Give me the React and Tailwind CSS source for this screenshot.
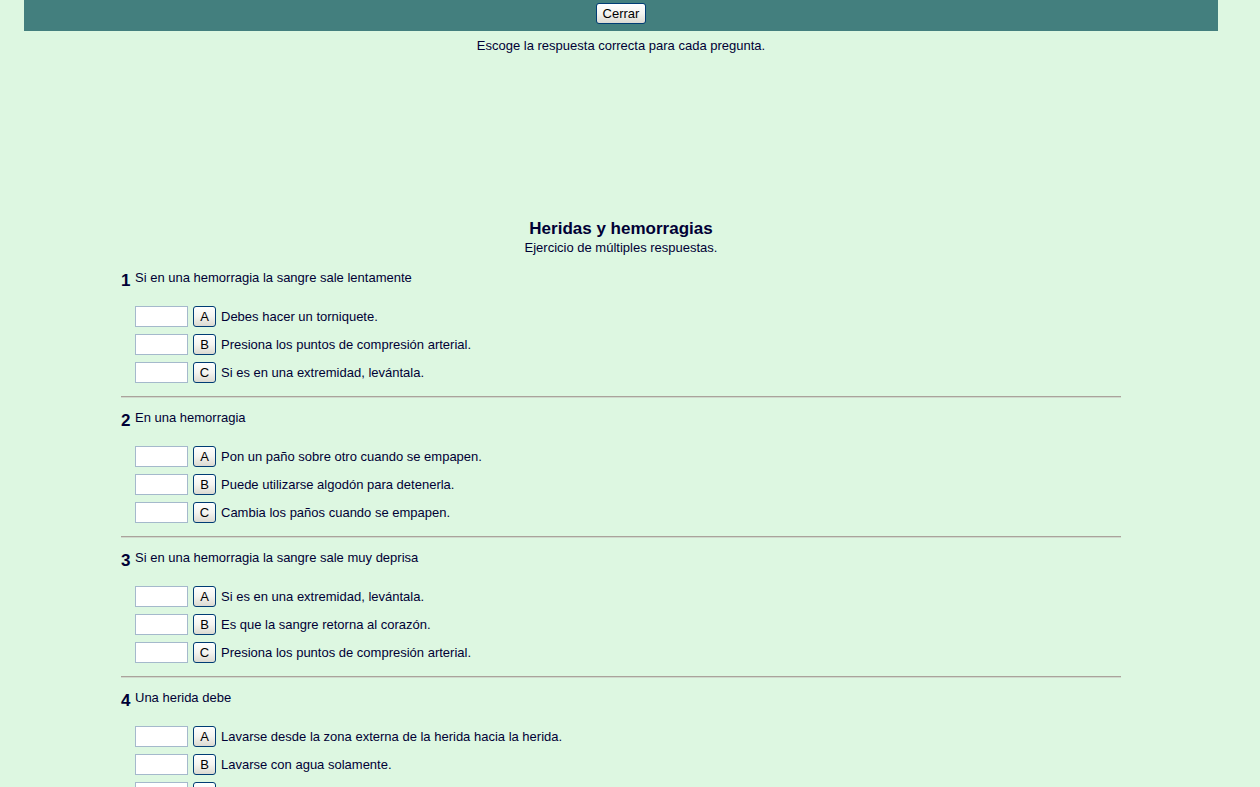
import React from 'react';

const questions = [
  {
    n: 1,
    text: 'Si en una hemorragia la sangre sale lentamente',
    options: ['Debes hacer un torniquete.', 'Presiona los puntos de compresión arterial.', 'Si es en una extremidad, levántala.'],
  },
  {
    n: 2,
    text: 'En una hemorragia',
    options: ['Pon un paño sobre otro cuando se empapen.', 'Puede utilizarse algodón para detenerla.', 'Cambia los paños cuando se empapen.'],
  },
  {
    n: 3,
    text: 'Si en una hemorragia la sangre sale muy deprisa',
    options: ['Si es en una extremidad, levántala.', 'Es que la sangre retorna al corazón.', 'Presiona los puntos de compresión arterial.'],
  },
  {
    n: 4,
    text: 'Una herida debe',
    options: ['Lavarse desde la zona externa de la herida hacia la herida.', 'Lavarse con agua solamente.', 'Tapar la herida con algodón.'],
  },
];

const letters = ['A', 'B', 'C'];

function XpButton({ children, className = '' }) {
  return (
    <button
      className={`flex items-center justify-center rounded-[3px] border border-[#003c74] bg-gradient-to-b from-white via-[#f4f4f0] to-[#dcdad2] text-[13px] leading-none text-black ${className}`}
    >
      {children}
    </button>
  );
}

export default function App() {
  return (
    <div className="min-h-screen bg-[#ddf7e1] font-['Liberation_Sans',Arial,sans-serif] text-[#000035]">
      <div className="w-[1242px]">
        <div className="ml-[24px] flex h-[31px] w-[1194px] justify-center bg-[#437f7e] pt-[3px]">
          <XpButton className="h-[21px] w-[50px]">Cerrar</XpButton>
        </div>

        <p className="mt-[7px] text-center text-[13px] leading-[15px]">Escoge la respuesta correcta para cada pregunta.</p>

        <div className="h-[166px]" />

        <h1 className="text-center text-[17px] font-bold leading-[20px]">Heridas y hemorragias</h1>
        <p className="mt-[1px] text-center text-[13px] leading-[15px]">Ejercicio de múltiples respuestas.</p>

        <div className="ml-[121px] mt-[14px] w-[1000px]">
          {questions.map((q) => (
            <div key={q.n}>
              <div className="flex items-start">
                <span className="w-[14px] pt-[1px] text-[17px] font-bold leading-[21px]">{q.n}</span>
                <span className="pt-[1px] text-[13px] leading-[15px]">{q.text}</span>
              </div>
              <div className="ml-[14px] mt-[15px] flex flex-col gap-[7px]">
                {q.options.map((opt, i) => (
                  <div key={i} className="flex items-center">
                    <input
                      type="text"
                      className="h-[21px] w-[53px] border border-[#a5b9cc] bg-white outline-none"
                    />
                    <XpButton className="ml-[5px] h-[21px] w-[23px]">{letters[i]}</XpButton>
                    <span className="ml-[5px] text-[13px] leading-[15px]">{opt}</span>
                  </div>
                ))}
              </div>
              <div className="mb-[11px] mt-[13px] h-[2px] border-t border-[#aaa39b] bg-[#cfd9cc]" />
            </div>
          ))}
        </div>
      </div>
    </div>
  );
}
